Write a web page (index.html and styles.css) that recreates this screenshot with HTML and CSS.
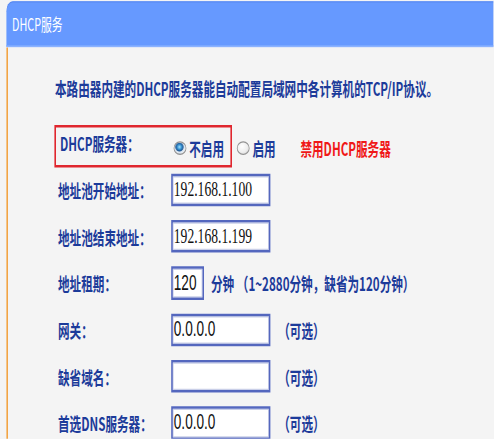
FILE: index.html
```html
<!DOCTYPE html>
<html lang="zh-CN">
<head>
<meta charset="utf-8">
<title>DHCP服务</title>
<link rel="stylesheet" href="styles.css">
</head>
<body>
<div class="frame">
<div class="stage">
  <div class="panel">
    <div class="title">DHCP服务</div>
    <div class="content">
      <p class="intro">本路由器内建的DHCP服务器能自动配置局域网中各计算机的TCP/IP协议。</p>
      <div class="form">
        <div class="server-row">
          <div class="server-box">
            <span class="label box-label">DHCP服务器：</span>
            <span class="radio on"></span>
            <span class="opt">不启用</span>
          </div>
          <span class="radio"></span>
          <span class="opt">启用</span>
          <span class="note">禁用DHCP服务器</span>
        </div>
        <div class="fields">
          <div class="row">
            <span class="label">地址池开始地址：</span>
            <input class="field serif" type="text" value="192.168.1.100">
          </div>
          <div class="row">
            <span class="label">地址池结束地址：</span>
            <input class="field serif" type="text" value="192.168.1.199">
          </div>
          <div class="row">
            <span class="label">地址租期：</span>
            <input class="field short" type="text" value="120">
            <span class="hint lease">分钟 （1~2880分钟，缺省为120分钟）</span>
          </div>
          <div class="row">
            <span class="label">网关：</span>
            <input class="field" type="text" value="0.0.0.0">
            <span class="hint">（可选）</span>
          </div>
          <div class="row">
            <span class="label">缺省域名：</span>
            <input class="field" type="text" value="">
            <span class="hint">（可选）</span>
          </div>
          <div class="row">
            <span class="label">首选DNS服务器：</span>
            <input class="field" type="text" value="0.0.0.0">
            <span class="hint">（可选）</span>
          </div>
        </div>
      </div>
    </div>
  </div>
</div>
</div>
</body>
</html>
```
FILE: styles.css
```css
html, body {
  margin: 0;
  padding: 0;
  background: #f4f4f4;
  overflow: hidden;
}

body {
  width: 494px;
  height: 439px;
  font-family: "Noto Sans CJK SC", "Noto Sans", sans-serif;
}

.frame {
  width: 494px;
  height: 439px;
  overflow: hidden;
}

/* The screenshot is stretched: narrow horizontally, tall vertically. */
.stage {
  width: 617.4px;
  height: 351px;
  overflow: hidden;
  transform: scale(0.8, 1.25);
  transform-origin: 0 0;
}

.panel {
  margin-left: 7.5px;
  padding-top: 0.8px;
  background: #f4f4f4;
}

.title {
  height: 36px;
  line-height: 36px;
  padding-left: 7.5px;
  background: #6699ff;
  color: #ffffff;
  font-size: 13.5px;
  border-top-left-radius: 8px;
  box-shadow: inset 0 1px 0 #5a89f0, inset 0 -1px 0 #7aa8ff;
  border-bottom: 1px solid #a6c4ff;
}

.content {
  border-left: 2px solid #f2a444;
  padding-left: 59.25px;
  height: 320px;
  color: #1c3b9a;
  font-size: 14.5px;
  font-weight: bold;
}

.intro {
  margin: 0;
  padding-top: 23px;
  line-height: 20px;
  white-space: nowrap;
}

.form {
  margin-top: 18.8px;
  margin-left: -1.25px;
}

.server-row {
  display: flex;
  align-items: center;
  height: 34.4px;
}

.server-box {
  display: flex;
  align-items: center;
  box-sizing: border-box;
  height: 34.4px;
  width: 222.5px;
  border: 2px solid #e0262e;
  padding-left: 5.5px;
}

.label {
  white-space: nowrap;
}

.box-label {
  width: 142px;
  position: relative;
  top: -2px;
}

.radio {
  display: inline-block;
  box-sizing: border-box;
  width: 16px;
  height: 11.2px;
  border-radius: 50%;
  border: 1px solid #939393;
  background: radial-gradient(ellipse at 40% 35%, #ffffff 0%, #eeeeee 55%, #cdcdcd 100%);
  flex: none;
  margin-top: 3px;
}

.radio.on {
  background: radial-gradient(ellipse at 45% 40%, #a8e4ff 0%, #3390d0 26%, #1a4f8c 42%, #cfe0f0 50%, #f2f2f2 72%, #c9c9c9 100%);
}

.server-row > .radio {
  margin-left: 6px;
}

.opt {
  margin-left: 3.5px;
  white-space: nowrap;
  margin-top: 4px;
}

.note {
  margin-left: 31px;
  color: #f01818;
  white-space: nowrap;
  margin-top: 4px;
}

.fields {
  display: flex;
  flex-direction: column;
  gap: 10.9px;
  margin-top: 4.8px;
}

.row {
  display: flex;
  align-items: center;
  height: 26.4px;
  padding-left: 5px;
}

.row .label {
  width: 141.25px;
  flex: none;
}

.field {
  box-sizing: border-box;
  width: 124px;
  height: 26.4px;
  margin: 0;
  padding: 0 0 0 1.5px;
  border: 2px solid #5467be;
  box-shadow: inset 0 0 0 1px #c9cfe8;
  background: #ffffff;
  color: #111111;
  font-family: "Liberation Sans", Arial, sans-serif;
  font-size: 17px;
  font-weight: normal;
  outline: none;
  flex: none;
}

.field.serif {
  font-family: "Liberation Serif", "Times New Roman", serif;
}

.field.short {
  width: 41px;
}

.hint {
  margin-left: 10px;
  white-space: nowrap;
}

.hint.lease {
  margin-left: 9px;
}
```
